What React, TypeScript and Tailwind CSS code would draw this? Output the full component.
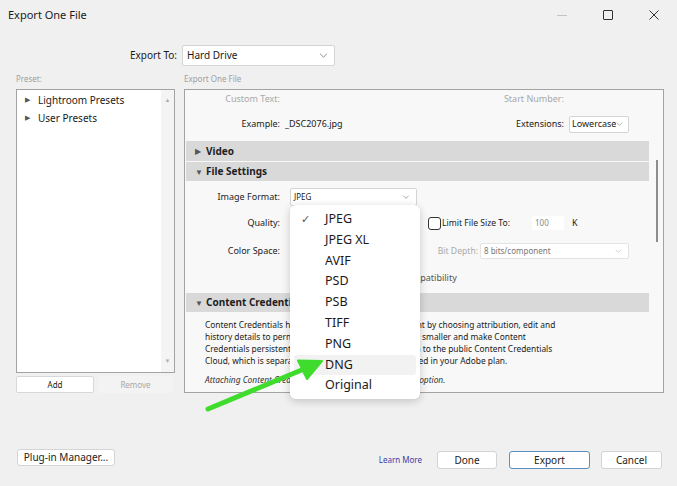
import { ReactNode } from "react";

const Chevron = ({ className = "" }: { className?: string }) => (
  <svg viewBox="0 0 10 6" className={className} fill="none">
    <path d="M1 1L5 5L9 1" stroke="currentColor" strokeWidth="1" />
  </svg>
);

const SectionHeader = ({ open, title }: { open: boolean; title: string }) => (
  <div className="mx-px flex h-full items-center bg-[#d9d9d9] pl-[9px]">
    <span className="w-[11px] text-[8px] text-[#555]">{open ? "▼" : "▶"}</span>
    <span className="text-[10px] font-bold text-[#1e1e1e]">{title}</span>
  </div>
);

const Label = ({ children, muted }: { children: ReactNode; muted?: boolean }) => (
  <div
    className={
      "w-[95px] shrink-0 text-right text-[9px] " +
      (muted ? "text-[#a8a8a8]" : "text-[#222]")
    }
  >
    {children}
  </div>
);

const formats = ["JPEG", "JPEG XL", "AVIF", "PSD", "PSB", "TIFF", "PNG", "DNG", "Original"];

export default function App() {
  return (
    <div className="relative h-[486px] w-[677px] overflow-hidden bg-[#f0f0f0] font-['Noto_Sans',sans-serif] text-[#1a1a1a]">
      {/* title bar */}
      <div className="flex h-[30px] items-center">
        <span className="pl-[8px] text-[11px] text-[#1a1a1a]">Export One File</span>
        <div className="ml-auto flex h-full">
          <div className="flex w-[46px] items-center justify-center">
            <div className="h-px w-[10px] bg-[#c4c4c4]" />
          </div>
          <div className="flex w-[46px] items-center justify-center">
            <div className="h-[10px] w-[10px] rounded-[1px] border border-[#333]" />
          </div>
          <div className="flex w-[46px] items-center justify-center">
            <svg viewBox="0 0 10 10" className="h-[10px] w-[10px]">
              <path d="M0.5 0.5L9.5 9.5M9.5 0.5L0.5 9.5" stroke="#333" strokeWidth="1" />
            </svg>
          </div>
        </div>
      </div>

      {/* export to */}
      <div className="mt-[15px] flex h-[21px] items-center">
        <div className="w-[177px] text-right text-[10px] text-[#1a1a1a]">Export To:</div>
        <div className="ml-[5px] flex h-[21px] w-[153px] items-center rounded-[2px] border border-[#d4d4d4] bg-white pl-[4px] pr-[6px] text-[10px]">
          <span>Hard Drive</span>
          <Chevron className="ml-auto h-[5px] w-[9px] text-[#777]" />
        </div>
      </div>

      {/* column labels */}
      <div className="mt-[7px] flex h-[12px] items-center text-[8px] text-[#a0a0a0]">
        <span className="ml-[16px] w-[168px]">Preset:</span>
        <span>Export One File</span>
      </div>

      <div className="mt-[4px] flex">
        {/* presets column */}
        <div className="ml-[16px] w-[159px]">
          <div className="flex h-[284px] border border-[#a3a3a3] bg-white">
            <div className="flex-1 pt-[1px]">
              <div className="flex h-[18px] items-center pl-[8px] text-[10px]">
                <span className="w-[13px] text-[7px] text-[#555]">▶</span>
                Lightroom Presets
              </div>
              <div className="flex h-[18px] items-center pl-[8px] text-[10px]">
                <span className="w-[13px] text-[7px] text-[#555]">▶</span>
                User Presets
              </div>
            </div>
            <div className="flex w-[13px] flex-col items-center justify-between bg-[#f4f4f4] py-[6px] text-[6px] text-[#b0b0b0]">
              <span>▲</span>
              <span>▼</span>
            </div>
          </div>
          <div className="mt-[3px] flex h-[17px] gap-[4px]">
            <button className="w-[78px] rounded-[2px] border border-[#d8d8d8] bg-white text-[8px] text-[#222]">
              Add
            </button>
            <button className="w-[75px] rounded-[2px] bg-[#f3f3f3] text-[8px] text-[#a8a8a8]">
              Remove
            </button>
          </div>
        </div>

        {/* settings panel */}
        <div className="ml-[9px] flex h-[304px] w-[480px] border border-[#a3a3a3] bg-[#f8f8f8]">
          <div className="flex w-[465px] flex-col">
            <div className="mt-[2px] flex h-[14px] items-center text-[9px] text-[#a8a8a8]">
              <Label muted>Custom Text:</Label>
              <div className="ml-auto">Start Number:</div>
              <div className="w-[86px]" />
            </div>
            <div className="mt-[9px] flex h-[18px] items-center text-[9px]">
              <Label>Example:</Label>
              <span className="ml-[5px]">_DSC2076.jpg</span>
              <span className="ml-auto">Extensions:</span>
              <div className="ml-[5px] mr-[21px] flex h-[17px] w-[60px] items-center overflow-hidden rounded-[2px] border border-[#d4d4d4] bg-white pl-[2px] pr-[5px] text-[9px]">
                <span className="w-[44px] overflow-hidden whitespace-nowrap">Lowercase</span>
                <Chevron className="ml-auto h-[4px] w-[7px] shrink-0 text-[#888]" />
              </div>
            </div>
            <div className="mt-[8px] h-[20px]">
              <SectionHeader open={false} title="Video" />
            </div>
            <div className="mt-px h-[19px]">
              <SectionHeader open title="File Settings" />
            </div>
            <div className="mt-[7px] flex h-[18px] items-center">
              <Label>Image Format:</Label>
              <div className="ml-[10px] flex h-[18px] w-[127px] items-center rounded-[2px] border border-[#d4d4d4] bg-white pl-[3px] pr-[6px] text-[8px]">
                <span>JPEG</span>
                <Chevron className="ml-auto h-[4px] w-[8px] text-[#777]" />
              </div>
            </div>
            <div className="mt-[10px] flex h-[14px] items-center">
              <Label>Quality:</Label>
              <div className="w-[148px]" />
              <div className="h-[13px] w-[13px] rounded-[3px] border border-[#333] bg-white" />
              <span className="ml-px text-[8.6px]">Limit File Size To:</span>
              <div className="ml-[22px] flex h-[14px] w-[32px] items-center bg-white pl-[3px] text-[8px] text-[#888]">
                100
              </div>
              <span className="ml-[8px] text-[9px]">K</span>
            </div>
            <div className="mt-[13px] flex h-[16px] items-center">
              <Label>Color Space:</Label>
              <div className="w-[148px]" />
              <span className="w-[50px] whitespace-nowrap text-right text-[8.6px] text-[#aaa]">Bit Depth:</span>
              <div className="ml-[2px] flex h-[16px] w-[149px] items-center rounded-[2px] border border-[#e4e4e4] bg-white pl-[3px] pr-[6px] text-[8px] text-[#777]">
                <span>8 bits/component</span>
                <Chevron className="ml-auto h-[4px] w-[7px] text-[#bbb]" />
              </div>
            </div>
            <div className="mt-[12px] flex h-[14px] items-center text-[9px]">
              <div className="w-[158px]" />
              <div className="h-[12px] w-[12px] rounded-[3px] border border-[#333] bg-white" />
              <span className="ml-[3px] text-[#555]">Maximize Compatibility</span>
            </div>
            <div className="mt-[8px] h-[19px]">
              <SectionHeader open title="Content Credentials" />
            </div>
            <p className="ml-[20px] mt-[7px] whitespace-nowrap text-[8.4px] leading-[12px] text-[#222]">
              Content Credentials help you get credit for your content by choosing attribution, edit and
              <br />
              history details to permanently attach. To keep file sizes smaller and make Content
              <br />
              Credentials persistent, you can choose to publish them to the public Content Credentials
              <br />
              Cloud, which is separate from the cloud storage included in your Adobe plan.
            </p>
            <p className="ml-[20px] mt-[7px] whitespace-nowrap text-[8.4px] italic leading-[12px] text-[#333]">
              Attaching Content Credentials is currently an early access option.
            </p>
          </div>
          <div className="flex flex-1 justify-center pt-[70px]">
            <div className="h-[82px] w-[2px] bg-[#8d8d8d]" />
          </div>
        </div>
      </div>

      {/* footer */}
      <div className="mt-[56px] flex items-start">
        <button className="ml-[17px] h-[17px] w-[98px] rounded-[3px] border border-[#d4d4d4] bg-white text-[10px] text-[#222]">
          Plug-in Manager...
        </button>
        <div className="ml-auto mr-[15px] mt-[2px] flex items-center">
          <span className="mr-[15px] text-[8px] text-[#3c3ca8]">Learn More</span>
          <button className="h-[18px] w-[60px] rounded-[3px] border border-[#d4d4d4] bg-white text-[10px] text-[#222]">
            Done
          </button>
          <button className="ml-[12px] h-[18px] w-[81px] rounded-[3px] border border-[#5a8fc0] bg-white text-[10px] text-[#222]">
            Export
          </button>
          <button className="ml-[11px] h-[18px] w-[61px] rounded-[3px] border border-[#d4d4d4] bg-white text-[10px] text-[#222]">
            Cancel
          </button>
        </div>
      </div>

      {/* image format dropdown menu */}
      <div className="absolute left-[290px] top-[205px] w-[130px] rounded-[6px] bg-white pb-[3px] pt-[4px] shadow-[0_2px_8px_rgba(0,0,0,0.2)]">
        {formats.map((f) => (
          <div
            key={f}
            className={
              "mx-[4px] flex h-[20.8px] items-center rounded-[3px] text-[12.5px] text-[#1a1a1a] " +
              (f === "DNG" ? "bg-[#f2f2f2]" : "")
            }
          >
            <span className="w-[31px] pl-[7px] text-[11px] text-[#555]">{f === "JPEG" ? "✓" : ""}</span>
            {f}
          </div>
        ))}
      </div>

      {/* green pointer arrow */}
      <svg className="pointer-events-none absolute left-0 top-0 h-[486px] w-[677px]" viewBox="0 0 677 486">
        <path d="M208 409L304 369" stroke="#3fdc2e" strokeWidth="5" strokeLinecap="round" />
        <path d="M322 361L298 360.5L307 379Z" fill="#3fdc2e" stroke="#3fdc2e" strokeWidth="2" strokeLinejoin="round" />
      </svg>
    </div>
  );
}
